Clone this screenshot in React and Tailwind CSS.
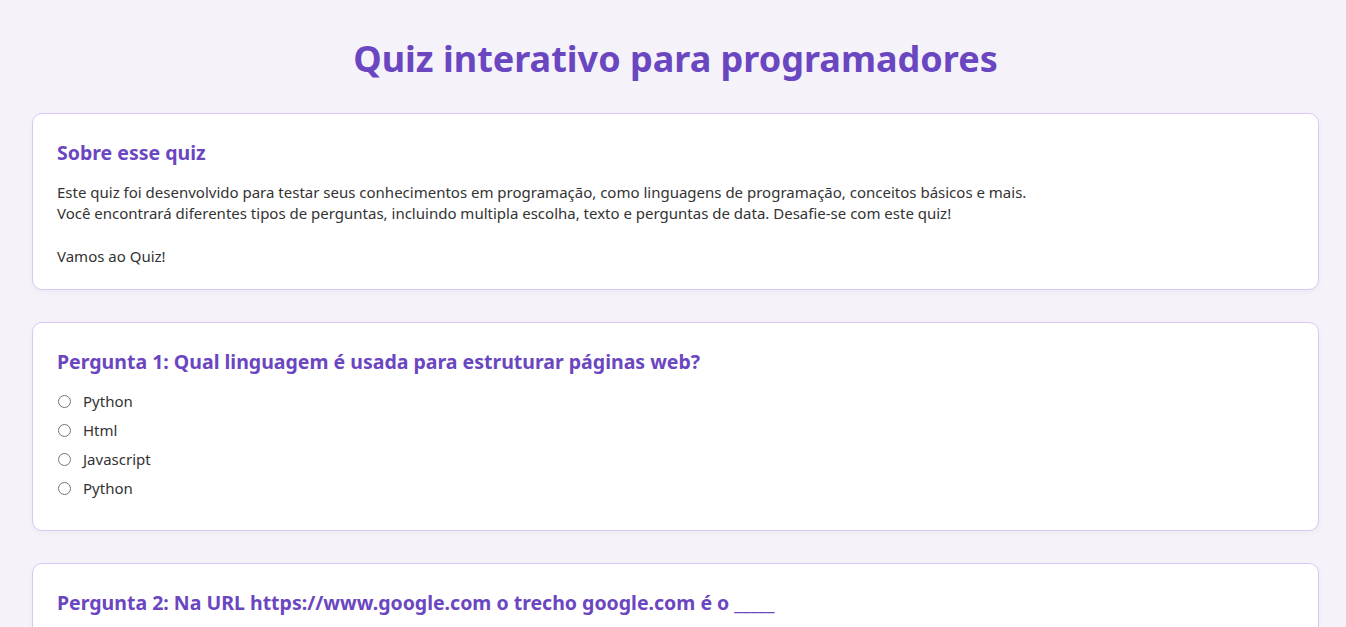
import React from 'react';

const perguntas = [
  {
    titulo: 'Pergunta 1: Qual linguagem é usada para estruturar páginas web?',
    opcoes: ['Python', 'Html', 'Javascript', 'Python'],
  },
  {
    titulo: 'Pergunta 2: Na URL https://www.google.com o trecho google.com é o _____',
    opcoes: [],
  },
];

const Card = ({ children, className = '' }) => (
  <section
    className={`bg-white border border-[#d9c8f7] rounded-[10px] shadow-[0_2px_6px_rgba(0,0,0,0.04)] px-6 ${className}`}
  >
    {children}
  </section>
);

export default function App() {
  return (
    <div
      className="min-h-screen bg-[#f5f3f9] pl-8 pr-[27px] text-[#333]"
      style={{ fontFamily: '"Noto Sans", "Open Sans", sans-serif' }}
    >
      <h1 className="pt-[34px] pb-[29px] text-center text-[36px] leading-[50px] font-bold text-[#6b46c1]">
        Quiz interativo para programadores
      </h1>

      <div className="flex flex-col gap-8">
        <Card className="pt-[25px] pb-[22px]">
          <h2 className="text-[19.5px] leading-[27px] font-bold text-[#6b46c1] mb-[16px]">Sobre esse quiz</h2>
          <p className="text-[15px] leading-[21.3px]">
            Este quiz foi desenvolvido para testar seus conhecimentos em programação, como linguagens de programação, conceitos básicos e mais.
            <br />
            Você encontrará diferentes tipos de perguntas, incluindo multipla escolha, texto e perguntas de data. Desafie-se com este quiz!
            <br />
            <br />
            Vamos ao Quiz!
          </p>
        </Card>

        {perguntas.map((p, i) => (
          <Card key={i} className="pt-[25px] pb-[27px]">
            <h2 className="text-[19.5px] leading-[27px] font-bold text-[#6b46c1] mb-[12px]">{p.titulo}</h2>
            {p.opcoes.length > 0 && (
              <div className="flex flex-col">
                {p.opcoes.map((o, j) => (
                  <label key={j} className="flex items-center h-[29px] text-[15px]">
                    <input
                      type="radio"
                      name={`q${i}`}
                      className="w-[13px] h-[13px] ml-[1px] mr-[12px] accent-[#6b46c1]"
                    />
                    {o}
                  </label>
                ))}
              </div>
            )}
          </Card>
        ))}
      </div>
    </div>
  );
}
